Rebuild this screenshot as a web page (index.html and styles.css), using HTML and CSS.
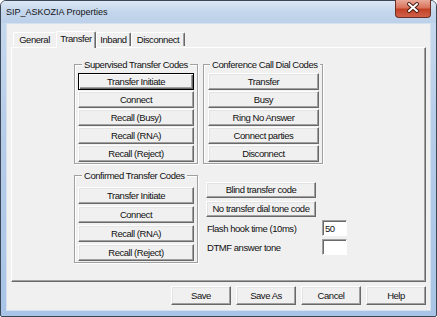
FILE: index.html
```html
<!DOCTYPE html>
<html lang="en">
<head>
  <meta charset="UTF-8" />
  <title>SIP_ASKOZIA Properties</title>
  <link rel="stylesheet" href="styles.css">
</head>
<body>
  <div class="window">
    <div class="titlebar">
      <span class="title">SIP_ASKOZIA Properties</span>
      <div class="close">
        <svg width="36" height="18" viewBox="0 0 36 18">
          <path d="M14 5 L22 12 M22 5 L14 12" stroke="#4a1d14" stroke-width="4" stroke-linecap="round"/>
          <path d="M14 5 L22 12 M22 5 L14 12" stroke="#fff" stroke-width="2" stroke-linecap="round"/>
        </svg>
      </div>
    </div>

    <div class="client">
      <div class="tabs">
        <div class="tab t-general">General</div>
        <div class="tab t-transfer active">Transfer</div>
        <div class="tab t-inband">Inband</div>
        <div class="tab t-disconnect">Disconnect</div>
      </div>

      <div class="panel">
        <div class="layout">
          <fieldset class="group supervised">
            <legend>Supervised Transfer Codes</legend>
            <button class="btn default">Transfer Initiate</button>
            <button class="btn">Connect</button>
            <button class="btn">Recall (Busy)</button>
            <button class="btn">Recall (RNA)</button>
            <button class="btn">Recall (Reject)</button>
          </fieldset>

          <fieldset class="group conference">
            <legend>Conference Call Dial Codes</legend>
            <button class="btn">Transfer</button>
            <button class="btn">Busy</button>
            <button class="btn">Ring No Answer</button>
            <button class="btn">Connect parties</button>
            <button class="btn">Disconnect</button>
          </fieldset>

          <fieldset class="group confirmed">
            <legend>Confirmed Transfer Codes</legend>
            <button class="btn">Transfer Initiate</button>
            <button class="btn">Connect</button>
            <button class="btn">Recall (RNA)</button>
            <button class="btn">Recall (Reject)</button>
          </fieldset>

          <div class="extra">
            <button class="btn wide">Blind transfer code</button>
            <button class="btn wide">No transfer dial tone code</button>
            <div class="field">
              <label>Flash hook time (10ms)</label>
              <input class="edit" type="text" value="50">
            </div>
            <div class="field">
              <label>DTMF answer tone</label>
              <input class="edit" type="text" value="">
            </div>
          </div>
        </div>
      </div>

      <div class="actions">
        <button class="btn action">Save</button>
        <button class="btn action">Save As</button>
        <button class="btn action">Cancel</button>
        <button class="btn action">Help</button>
      </div>
    </div>
  </div>
</body>
</html>
```

FILE: styles.css
```css
* {
  box-sizing: border-box;
  margin: 0;
  padding: 0;
}

body {
  background: #fff;
  font-family: 'Liberation Sans', Arial, sans-serif;
  font-size: 9.5px;
  letter-spacing: -0.45px;
  color: #111;
}

.window {
  width: 437px;
  height: 317px;
  border: 1px solid #3b4857;
  border-radius: 6px 6px 2px 2px;
  padding: 0 5px 5px;
  background: linear-gradient(to bottom, #c9daee, #b6cde9 40%, #a9c4e6);
  display: flex;
  flex-direction: column;
}

.titlebar {
  height: 22px;
  display: flex;
  justify-content: space-between;
  align-items: flex-start;
  background: linear-gradient(to bottom, #dbe7f4, #c3d6ec 50%, #bcd1ea);
  margin: 0 -5px;
  padding: 0 5px 0 5px;
  border-radius: 5px 5px 0 0;
}

.title {
  font-size: 9px;
  letter-spacing: 0;
  line-height: 22px;
  color: #141414;
}

.close {
  width: 36px;
  height: 18px;
  margin-top: -1px;
  border: 1px solid #6b2e22;
  border-top: none;
  border-radius: 0 0 4px 4px;
  background: linear-gradient(to bottom, #e9a99a, #d9735b 45%, #c24125 55%, #d0614a);
  overflow: hidden;
}

.close svg {
  display: block;
  margin: -1px 0 0 -1px;
}

.client {
  height: 288px;
  border: 1px solid #d6e1ee;
  background: #f0f0f0;
  display: flex;
  flex-direction: column;
}

/* tabs */
.tabs {
  height: 23px;
  display: flex;
  align-items: flex-end;
  padding-left: 6px;
}

.tab {
  height: 14px;
  line-height: 13px;
  text-align: center;
  background: #f0f0f0;
  border-top: 1px solid #fff;
  border-left: 1px solid #fff;
  border-right: 1px solid #696969;
  box-shadow: inset -1px 0 0 #a0a0a0;
  border-radius: 2px 2px 0 0;
  margin-bottom: 1px;
}

.t-general { width: 43px; border-right-color: #f0f0f0; box-shadow: none; }
.t-transfer { width: 40px; }
.t-inband { width: 35px; }
.t-disconnect { width: 54px; }

.tab.active {
  height: 17px;
  line-height: 14px;
  margin-bottom: -1px;
  position: relative;
  z-index: 1;
}

/* panel */
.panel {
  height: 235px;
  margin: 0 4px;
  border-top: 1px solid #fff;
  border-left: 1px solid #fff;
  border-right: 1px solid #696969;
  border-bottom: 1px solid #696969;
  box-shadow: inset -1px -1px 0 #a0a0a0;
}

.layout {
  display: grid;
  grid-template-columns: 124px 145px;
  column-gap: 5px;
  row-gap: 6px;
  padding: 11px 0 0 62px;
  align-items: start;
}

.group {
  border: 1px solid #a0a0a0;
  box-shadow: inset 1px 1px 0 #fff, 1px 1px 0 #fff;
  padding: 3px 3px 1px 3px;
  display: flex;
  flex-direction: column;
  gap: 1px;
  min-width: 0;
}

.group legend {
  line-height: 11px;
  padding: 0 2px;
  margin-left: 4px;
  background: #f0f0f0;
  white-space: nowrap;
}

.conference {
  width: 120px;
  padding-left: 4px;
}

.conference legend {
  margin-left: 2px;
}

.confirmed {
  padding-top: 6px;
  gap: 2px;
}

/* buttons */
.btn {
  font-family: inherit;
  font-size: inherit;
  letter-spacing: inherit;
  color: #111;
  height: 17px;
  background: #f0f0f0;
  border: 1px solid;
  border-color: #fff #696969 #696969 #fff;
  box-shadow: inset -1px -1px 0 #a0a0a0, inset 1px 1px 0 #e3e3e3;
  line-height: 14px;
  white-space: nowrap;
}

.btn.default {
  border-color: #000;
  box-shadow: inset 1px 1px 0 #fff, inset -1px -1px 0 #696969, inset -2px -2px 0 #a0a0a0;
}

.extra {
  display: flex;
  flex-direction: column;
  gap: 3px;
  padding: 12px 0 0 3px;
}

.btn.wide {
  width: 110px;
  height: 16px;
}

.field {
  display: flex;
  align-items: center;
  height: 16px;
}

.field label {
  width: 116px;
  padding-left: 1px;
}

.edit {
  width: 25px;
  height: 16px;
  font-family: inherit;
  font-size: inherit;
  letter-spacing: inherit;
  color: #111;
  background: #fff;
  border: 1px solid;
  border-color: #a0a0a0 #fff #fff #a0a0a0;
  box-shadow: inset 1px 1px 0 #696969;
  padding: 1px 0 0 2px;
  outline: none;
}

.actions {
  display: flex;
  justify-content: flex-end;
  gap: 5px;
  padding: 4px 4px 0 0;
}

.btn.action {
  width: 60px;
  height: 19px;
}
```
